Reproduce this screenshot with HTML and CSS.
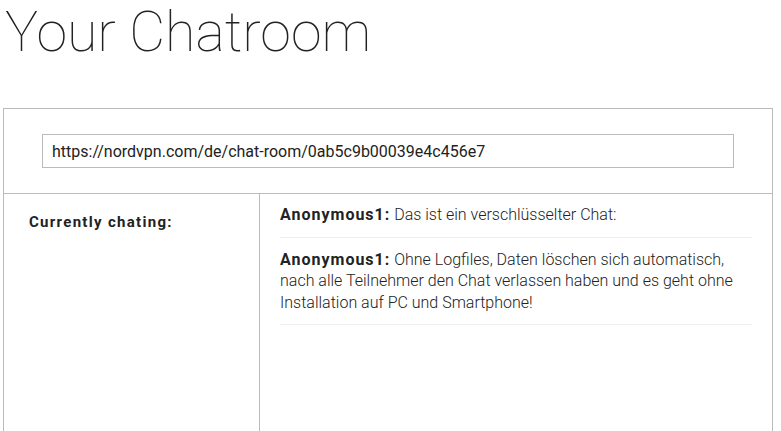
FILE: index.html
```html
<!DOCTYPE html>
<html lang="de">
<head>
    <meta charset="UTF-8">
    <meta name="viewport" content="width=device-width, initial-scale=1.0">
    <title>Your Chatroom</title>
    <link rel="stylesheet" href="styles.css">
</head>
<body>
    <h1 class="title">Your Chatroom</h1>
    <div class="chat-box">
        <div class="link-row">
            <input class="room-link" type="text" value="https://nordvpn.com/de/chat-room/0ab5c9b00039e4c456e7" readonly>
        </div>
        <div class="chat-body">
            <div class="users">
                <h3>Currently chating:</h3>
            </div>
            <div class="messages">
                <div class="message"><b>Anonymous1:</b> Das ist ein verschlüsselter Chat:</div>
                <div class="message"><b>Anonymous1:</b> Ohne Logfiles, Daten löschen sich automatisch, nach alle Teilnehmer den Chat verlassen haben und es geht ohne Installation auf PC und Smartphone!</div>
            </div>
        </div>
    </div>
</body>
</html>
```

FILE: styles.css
```css
body {
    font-family: Roboto, Arial, sans-serif;
    color: #222;
    margin: 0 8px 0 3px;
    background: #fff;
}
.title {
    font-weight: 100;
    font-size: 55.5px;
    margin: 0;
    padding: 0 0 0 2px;
    line-height: 66px;
    color: #222;
}
.chat-box {
    margin-top: 42px;
    border: 1px solid #bbb;
    border-bottom: none;
}
.link-row {
    padding: 25px 38px 25px 38px;
    border-bottom: 1px solid #bbb;
}
.room-link {
    display: block;
    box-sizing: border-box;
    width: 100%;
    height: 34px;
    padding: 0 9px;
    border: 1px solid #bbb;
    font-family: Roboto, Arial, sans-serif;
    font-size: 16px;
    color: #222;
    outline: none;
}
.chat-body {
    display: flex;
    height: 240px;
}
.users {
    width: 256px;
    border-right: 1px solid #bbb;
    padding: 19px 0 0 25px;
    box-sizing: border-box;
}
.users h3 {
    margin: 0;
    font-size: 15px;
    font-weight: 700;
    letter-spacing: 1.3px;
}
.messages {
    flex: 1;
    padding: 10px 20px 0 20px;
}
.message {
    font-weight: 300;
    font-size: 16px;
    line-height: 21.5px;
    padding: 0 0 11px 0;
    margin-bottom: 11px;
    border-bottom: 1px solid #eee;
}
.message b {
    font-weight: 700;
    letter-spacing: 1px;
}
```
